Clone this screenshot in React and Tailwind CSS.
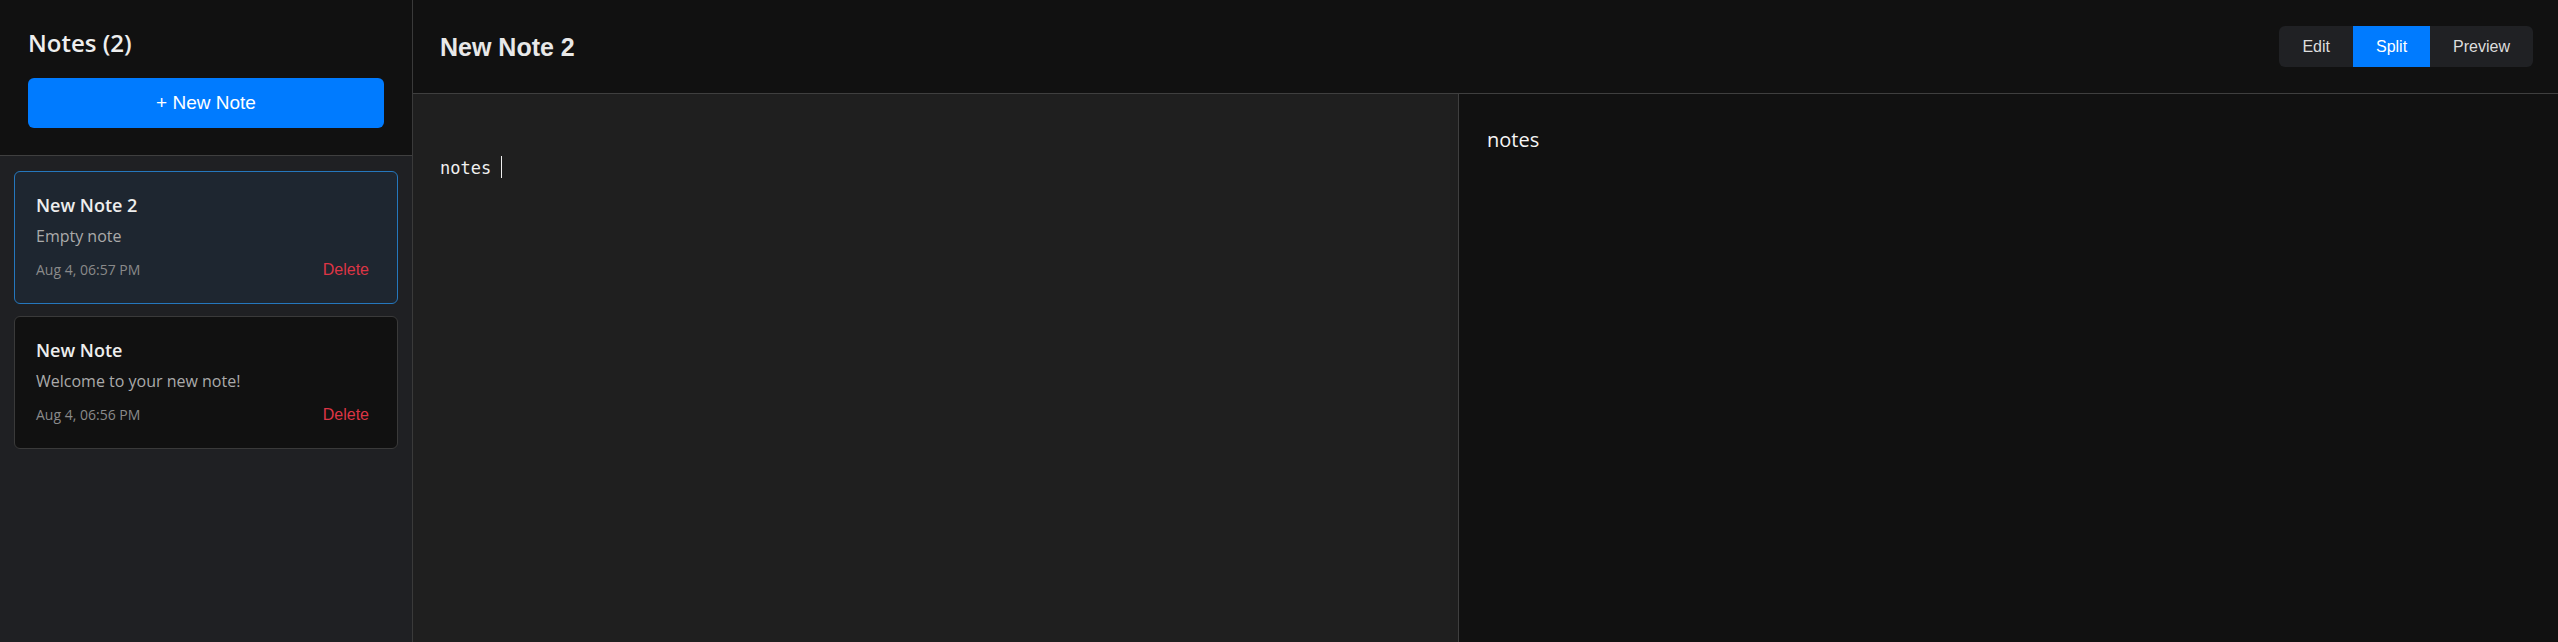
import React from "react";

const notes = [
  { id: 2, title: "New Note 2", preview: "Empty note", date: "Aug 4, 06:57 PM", active: true },
  { id: 1, title: "New Note", preview: "Welcome to your new note!", date: "Aug 4, 06:56 PM", active: false },
];

function NoteCard({ note }) {
  return (
    <div
      className={
        note.active
          ? "rounded-[6px] border border-[#2577bd] bg-[#1e2630] p-[21px]"
          : "rounded-[6px] border border-[#3a3a3a] bg-[#111111] p-[21px]"
      }
    >
      <div className="text-[18px] leading-6 font-semibold text-[#eeeeee]">{note.title}</div>
      <div className="mt-[7px] text-[16px] leading-6 text-[#aaaaaa]">{note.preview}</div>
      <div className="mt-[10px] flex items-center justify-between">
        <span className="text-[14px] leading-6 text-[#8a8a8a]">{note.date}</span>
        <button className="px-[7px] text-[16px] leading-6 text-[#dc3545] font-['Liberation_Sans',Arial,sans-serif]">
          Delete
        </button>
      </div>
    </div>
  );
}

function Sidebar() {
  return (
    <aside className="flex w-[413px] shrink-0 flex-col border-r border-[#3a3a3a] bg-[#1f2023]">
      <div className="h-[156px] border-b border-[#3f3f3f] bg-[#111111] px-[28px] pt-[27px]">
        <h1 className="text-[24px] leading-8 font-semibold text-[#eeeeee]">Notes (2)</h1>
        <button className="mt-[19px] h-[50px] w-full rounded-[6px] bg-[#007bff] text-[19px] text-white font-['Liberation_Sans',Arial,sans-serif]">
          + New Note
        </button>
      </div>
      <div className="flex flex-col gap-3 p-[14px] pt-[15px]">
        {notes.map((n) => (
          <NoteCard key={n.id} note={n} />
        ))}
      </div>
    </aside>
  );
}

function ViewToggle() {
  const modes = ["Edit", "Split", "Preview"];
  return (
    <div className="flex h-[41px] overflow-hidden rounded-[6px] bg-[#202124] font-['Liberation_Sans',Arial,sans-serif] text-[16px]">
      {modes.map((m) => (
        <button
          key={m}
          className={
            m === "Split"
              ? "h-full bg-[#007bff] px-[23px] text-white"
              : "h-full px-[23px] text-[#dddddd]"
          }
        >
          {m}
        </button>
      ))}
    </div>
  );
}

export default function App() {
  return (
    <div className="flex h-[642px] w-full bg-[#111111] font-['Open_Sans','Noto_Sans',sans-serif]">
      <Sidebar />
      <main className="flex min-w-0 flex-1 flex-col">
        <header className="flex h-[94px] shrink-0 items-center justify-between border-b border-[#3f3f3f] bg-[#111111] pl-[27px] pr-[25px]">
          <h2 className="text-[25px] leading-8 font-bold text-[#e8e8e8] font-['Liberation_Sans',Arial,sans-serif]">
            New Note 2
          </h2>
          <ViewToggle />
        </header>
        <div className="flex flex-1">
          <div className="w-[1046px] shrink-0 border-r border-[#3f3f3f] bg-[#1f1f1f] pl-[27px] pt-[58px]">
            <div className="whitespace-pre text-[17px] leading-6 text-[#f0f0f0] font-['DejaVu_Sans_Mono',monospace]">
              notes <span className="inline-block h-[22px] w-px translate-y-[4px] bg-[#f0f0f0]" />
            </div>
          </div>
          <div className="flex-1 bg-[#111111] pl-[28px] pt-[32px]">
            <p className="text-[20px] leading-7 text-[#f5f5f5]">notes</p>
          </div>
        </div>
      </main>
    </div>
  );
}
